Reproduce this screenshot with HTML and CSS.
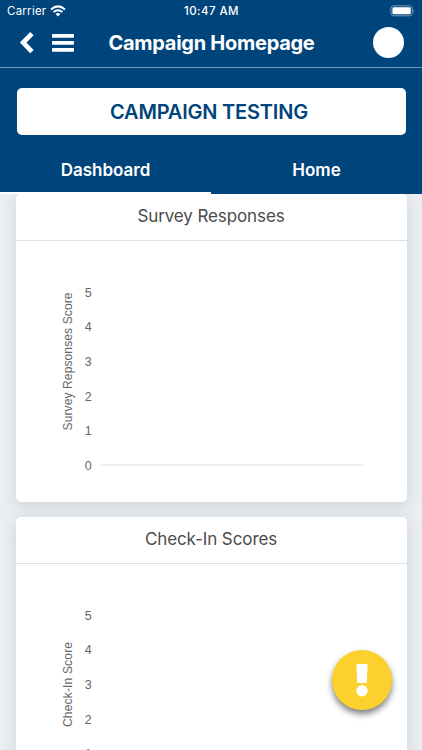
FILE: index.html
```html
<!DOCTYPE html>
<html lang="en">
<head>
<meta charset="utf-8">
<title>Campaign Homepage</title>
<link rel="stylesheet" href="styles.css">
</head>
<body>
<header class="header">
  <div class="status">
    <div class="status-left"><span class="carrier">Carrier</span>
      <svg class="wifi" width="16" height="12" viewBox="0 0 16 12" fill="none" stroke="#fff" stroke-width="2"><path d="M1 4.4Q8-1.6 15 4.4M3.5 7.1Q8 3.4 12.5 7.1"/><path d="M5.6 8.9Q8 7 10.4 8.9L8 11.4Z" fill="#fff" stroke="none"/></svg>
    </div>
    <span class="time">10:47 AM</span>
    <div class="status-right">
      <svg width="26" height="12" viewBox="0 0 26 12"><rect x=".9" y=".8" width="21.4" height="10" rx="2.8" fill="none" stroke="#7898b5"/><rect x="2.4" y="2.3" width="18.4" height="7" rx="1.4" fill="#fff"/><path d="M23.4 4.2Q25.2 5.8 23.4 7.4Z" fill="#7898b5"/></svg>
    </div>
  </div>
  <nav class="nav">
    <div class="nav-left">
      <svg class="back" width="16" height="24" viewBox="0 0 16 24"><path d="M12.9 2.6L4.2 11.6L12.9 20.6" fill="none" stroke="#fff" stroke-width="4.8"/></svg>
      <svg class="menu" width="22" height="20" viewBox="0 0 22 20" fill="#fff"><rect y="1" width="22" height="3.7" rx=".6"/><rect y="8" width="22" height="3.7" rx=".6"/><rect y="15" width="22" height="3.7" rx=".6"/></svg>
    </div>
    <h1 class="title">Campaign Homepage</h1>
    <div class="nav-right"><span class="avatar"></span></div>
  </nav>
  <button class="campaign">CAMPAIGN TESTING</button>
  <div class="tabs">
    <div class="tab active">Dashboard</div>
    <div class="tab">Home</div>
  </div>
</header>
<main class="cards">
  <section class="card">
    <h2 class="card-title">Survey Responses</h2>
    <svg class="chart" width="391" height="261" viewBox="0 0 391 261">
      <text class="axis" transform="translate(56.2 120.5) rotate(-90)" textLength="138">Survey Repsonses Score</text>
      <g class="ticks"><text x="72.3" y="55.8">5</text><text x="72.3" y="90.3">4</text><text x="72.3" y="124.9">3</text><text x="72.3" y="159.5">2</text><text x="72.3" y="194">1</text><text x="72.3" y="228.6">0</text></g>
      <path d="M85.5 223.8H347.5" stroke="#e8e8e8" stroke-width="1.2"/>
    </svg>
  </section>
  <section class="card">
    <h2 class="card-title">Check-In Scores</h2>
    <svg class="chart" width="391" height="261" viewBox="0 0 391 261">
      <text class="axis" transform="translate(56.2 120.5) rotate(-90)" textLength="85">Check-In Score</text>
      <g class="ticks"><text x="72.3" y="55.8">5</text><text x="72.3" y="90.3">4</text><text x="72.3" y="124.9">3</text><text x="72.3" y="159.5">2</text><text x="72.3" y="194">1</text><text x="72.3" y="228.6">0</text></g>
      <path d="M85.5 223.8H347.5" stroke="#e8e8e8" stroke-width="1.2"/>
    </svg>
  </section>
</main>
<div class="fab">
  <svg width="14" height="34" viewBox="0 0 14 34" fill="#fff"><path d="M2.4 1H11.6Q12.7 1 12.6 2L11.8 19Q11.7 20 10.7 20H3.3Q2.3 20 2.2 19L1.4 2Q1.3 1 2.4 1Z"/><circle cx="7" cy="27.7" r="5.7"/></svg>
</div>
</body>
</html>
```
FILE: styles.css
```css
* { box-sizing: border-box; }
body {
  margin: 0;
  height: 750px;
  overflow: hidden;
  display: flex;
  flex-direction: column;
  background: #ebeff3;
  font-family: Inter, "Liberation Sans", sans-serif;
}
.header { flex: none; height: 194px; background: #00447c; color: #fff; position: relative; z-index: 1; }
.status, .nav { display: grid; grid-template-columns: 1fr auto 1fr; align-items: center; }
.status { height: 22px; padding: 0 6px 0 7px; font-size: 11.5px; }
.status-left { display: flex; align-items: center; gap: 4px; }
.carrier { letter-spacing: .25px; }
.time { font-weight: 500; letter-spacing: .45px; }
.status-right { display: flex; justify-content: flex-end; }
.nav { height: 46px; padding: 0 18px 4px 19px; border-bottom: 1px solid #7596b5; }
.nav-left { display: flex; align-items: center; gap: 17px; }
.title { margin: 0; font-size: 20px; font-weight: 700; line-height: 28px; letter-spacing: -.27px; white-space: nowrap; }
.nav-right { display: flex; justify-content: flex-end; }
.avatar { width: 31px; height: 31px; border-radius: 50%; background: #fff; }
.campaign {
  display: block;
  width: 389px;
  height: 47px;
  margin: 20px auto 10px;
  padding: 1px 4px 0 0;
  border: 0;
  border-radius: 5px;
  background: #fff;
  color: #00447c;
  font: 600 20px/46px Inter, sans-serif;
  letter-spacing: -.2px;
}
.tabs { display: flex; height: 49px; }
.tab { flex: 1; line-height: 50px; text-align: center; font-size: 17px; font-weight: 600; }
.active { border-bottom: 2px solid #fff; }
.cards { display: flex; flex-direction: column; align-items: center; gap: 15px; }
.card { flex: none; width: 391px; height: 307.6px; border-radius: 5px; background: #fff; box-shadow: 0 4px 16px rgba(50, 60, 70, .16); }
.card-title {
  margin: 0;
  height: 47px;
  border-bottom: 1px solid #dedfe1;
  color: #4b4b4b;
  font-size: 17px;
  font-weight: 400;
  line-height: 44px;
  letter-spacing: -.1px;
  text-align: center;
}
.chart { display: block; }
.axis, .ticks { fill: #666; font-family: "Liberation Sans", sans-serif; }
.axis { font-size: 12px; text-anchor: middle; }
.ticks { font-size: 12.5px; text-anchor: middle; }
.fab {
  position: fixed;
  left: 332px;
  top: 650px;
  z-index: 2;
  width: 60px;
  height: 60px;
  display: flex;
  align-items: center;
  justify-content: center;
  border-radius: 50%;
  background: #fcd02d;
  box-shadow: 0 4px 6px rgba(0, 0, 0, .5);
}
```
